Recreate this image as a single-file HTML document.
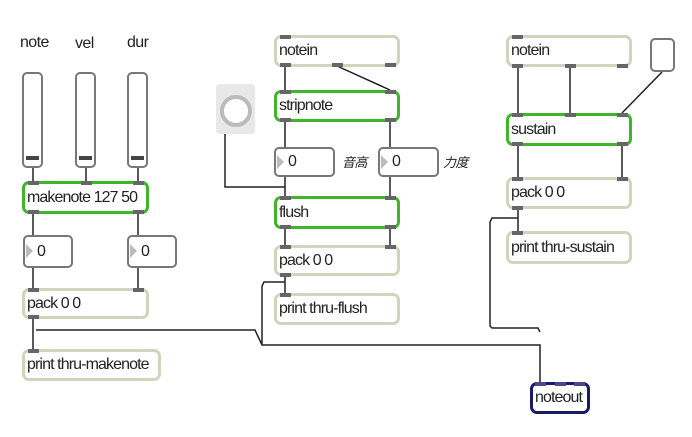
<!DOCTYPE html><html><head><style>
body{margin:0;width:692px;height:437px;background:#fff;position:relative;overflow:hidden;font-family:"Liberation Sans Narrow","Liberation Sans",sans-serif;}
.o{position:absolute;box-sizing:border-box;border:3px solid #d3d3bd;border-radius:7px;background:#fff;font-size:16px;color:#222;padding-left:2px;letter-spacing:-0.9px;}
.g{border-color:#3fb52a;border-width:3px;}
.n{border:2px solid #777;border-radius:5px;}
.p{position:absolute;height:4px;width:11px;background:#666;}
.lbl{position:absolute;font-size:16px;color:#222;letter-spacing:-0.6px;}
svg{position:absolute;left:0;top:0;}
.tri{position:absolute;width:0;height:0;border-top:7px solid transparent;border-bottom:7px solid transparent;border-left:7px solid #bbb;}
.sl{position:absolute;width:21px;height:96px;border:2px solid #777;border-radius:5px;box-sizing:border-box;background:#fff;}
.sl i{position:absolute;left:2px;right:2px;bottom:6px;height:4px;background:#444;}
</style></head><body>
<svg width="692" height="437"><g stroke="#222" stroke-width="1.5" fill="none">
<path d="M33 168V182M86 168V182M138 168V182"/>
<path d="M33 214V235M138 214V235M33 268V288M138 268V288"/>
<path d="M33 318V349M36 330H255L262 345H540V382"/>
<path d="M285 66V90M337 66L390 90M285 121V147M390 121V147M285 177V196M390 177V196"/>
<path d="M225 134V187H285M285 229V245M390 229V245M285 276V293M285 282H264L262 286V345"/>
<path d="M518 67V113M570 67V113M662 72L622 113M518 146V177M622 146V177M518 209V231M518 218H492L490 222V326L492 328H538L540 332"/>
</g></svg>
<div class="lbl" style="left:20px;top:34px">note</div>
<div class="lbl" style="left:75px;top:35px">vel</div>
<div class="lbl" style="left:127px;top:34px">dur</div>
<div class="sl" style="left:22px;top:72px"><i></i></div>
<div class="sl" style="left:75px;top:72px"><i></i></div>
<div class="sl" style="left:127px;top:72px"><i></i></div>
<div class="o g" style="left:22px;top:181px;width:127px;height:33px;line-height:27px">makenote 127 50</div>
<div class="o n" style="left:23px;top:235px;width:50px;height:33px;line-height:29px;padding-left:12px">0</div><div class="tri" style="left:26px;top:244px"></div>
<div class="o n" style="left:127px;top:235px;width:50px;height:33px;line-height:29px;padding-left:12px">0</div><div class="tri" style="left:130px;top:244px"></div>
<div class="o" style="left:22px;top:288px;width:127px;height:31px;line-height:25px">pack 0 0</div>
<div class="o" style="left:22px;top:349px;width:139px;height:32px;line-height:26px">print thru-makenote</div>
<div class="o" style="left:274px;top:35px;width:126px;height:32px;line-height:26px">notein</div>
<div style="position:absolute;left:216px;top:84px;width:39px;height:50px;background:#e8e8e8;border-radius:4px"></div>
<div style="position:absolute;left:220px;top:95px;width:24px;height:24px;border:4px solid #bbb;border-radius:50%;background:#fff"></div>
<div class="o g" style="left:274px;top:90px;width:126px;height:32px;line-height:26px">stripnote</div>
<div class="o n" style="left:274px;top:147px;width:61px;height:30px;line-height:26px;padding-left:12px">0</div><div class="tri" style="left:277px;top:155px"></div>
<div class="lbl" style="left:342px;top:152px;font-style:italic;font-family:'Noto Sans CJK SC',sans-serif;font-size:13px">音高</div>
<div class="o n" style="left:378px;top:147px;width:61px;height:30px;line-height:26px;padding-left:12px">0</div><div class="tri" style="left:381px;top:155px"></div>
<div class="lbl" style="left:443px;top:152px;font-style:italic;font-family:'Noto Sans CJK SC',sans-serif;font-size:13px">力度</div>
<div class="o g" style="left:274px;top:196px;width:126px;height:33px;line-height:27px">flush</div>
<div class="o" style="left:274px;top:245px;width:126px;height:31px;line-height:25px">pack 0 0</div>
<div class="o" style="left:274px;top:293px;width:126px;height:32px;line-height:26px">print thru-flush</div>
<div class="o" style="left:506px;top:35px;width:126px;height:32px;line-height:26px">notein</div>
<div class="o n" style="left:650px;top:38px;width:25px;height:34px"></div>
<div class="o g" style="left:506px;top:113px;width:126px;height:33px;line-height:27px">sustain</div>
<div class="o" style="left:506px;top:177px;width:126px;height:32px;line-height:26px">pack 0 0</div>
<div class="o" style="left:506px;top:231px;width:126px;height:33px;line-height:27px">print thru-sustain</div>
<div class="o" style="left:530px;top:382px;width:60px;height:32px;line-height:25px;border-color:#1a1a6a;border-width:3px">noteout</div>
<div class="p" style="left:28px;top:181px"></div><div class="p" style="left:81px;top:181px"></div><div class="p" style="left:133px;top:181px"></div>
<div class="p" style="left:28px;top:210px"></div><div class="p" style="left:133px;top:210px"></div>
<div class="p" style="left:28px;top:288px"></div><div class="p" style="left:133px;top:288px"></div><div class="p" style="left:28px;top:315px"></div>
<div class="p" style="left:28px;top:349px"></div>
<div class="p" style="left:280px;top:35px"></div><div class="p" style="left:280px;top:63px"></div><div class="p" style="left:332px;top:63px"></div><div class="p" style="left:385px;top:63px"></div>
<div class="p" style="left:280px;top:90px"></div><div class="p" style="left:385px;top:90px"></div><div class="p" style="left:280px;top:118px"></div><div class="p" style="left:385px;top:118px"></div>
<div class="p" style="left:280px;top:196px"></div><div class="p" style="left:385px;top:196px"></div><div class="p" style="left:280px;top:225px"></div><div class="p" style="left:385px;top:225px"></div>
<div class="p" style="left:280px;top:245px"></div><div class="p" style="left:385px;top:245px"></div><div class="p" style="left:280px;top:273px"></div>
<div class="p" style="left:280px;top:293px"></div>
<div class="p" style="left:512px;top:35px"></div><div class="p" style="left:512px;top:64px"></div><div class="p" style="left:565px;top:64px"></div><div class="p" style="left:617px;top:64px"></div>
<div class="p" style="left:512px;top:113px"></div><div class="p" style="left:565px;top:113px"></div><div class="p" style="left:617px;top:113px"></div>
<div class="p" style="left:512px;top:142px"></div><div class="p" style="left:617px;top:142px"></div>
<div class="p" style="left:512px;top:177px"></div><div class="p" style="left:617px;top:177px"></div><div class="p" style="left:512px;top:206px"></div>
<div class="p" style="left:512px;top:231px"></div>
<div class="p" style="left:535px;top:382px;background:#4a4a8a"></div><div class="p" style="left:555px;top:382px;background:#4a4a8a"></div><div class="p" style="left:574px;top:382px;background:#4a4a8a"></div>
</body></html>
